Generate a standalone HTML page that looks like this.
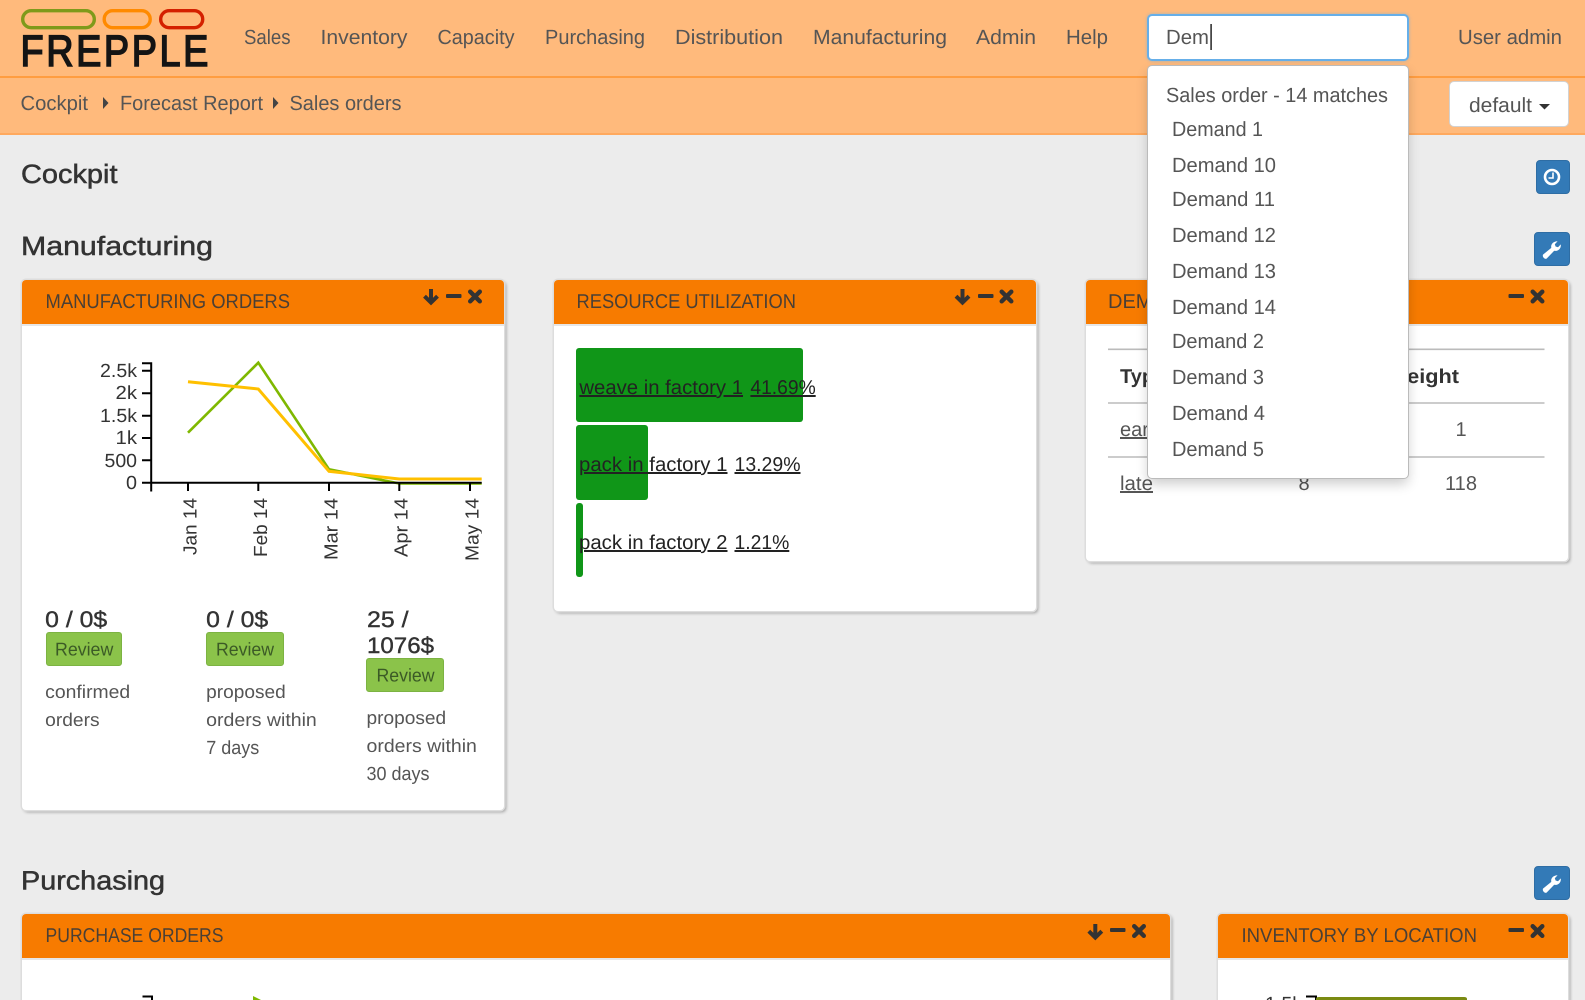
<!DOCTYPE html>
<html lang="en">
<head>
<meta charset="utf-8">
<title>frePPLe Cockpit</title>
<style>
html,body{margin:0;padding:0;width:1585px;height:1000px;overflow:hidden;background:#ececec;font-family:"Liberation Sans",sans-serif}
#page{position:relative;width:1585px;height:1000px;overflow:hidden;background:#ececec}
.abs{position:absolute}
#top{left:0;top:0;width:1585px;height:76px;background:#ffba7c;border-bottom:2px solid #ff9d40}
#sub{left:0;top:78px;width:1585px;height:55px;background:#ffba7c;border-bottom:2px solid #ffa95e}
.card{position:absolute;background:#fff;border-radius:4px;box-shadow:0 0 0 1.5px #ddd,2px 2px 3px rgba(0,0,0,.36)}
.card .h{height:44px;background:#f77b00;border-bottom:2px solid #e6e6e6;border-radius:4px 4px 0 0}
.bar{position:absolute;background:#109618;border-radius:3px}
.btn{position:absolute;background:#337ab7;border:1px solid #2e6da4;border-radius:4px;box-sizing:border-box}
.rev{position:absolute;background:#8bc34a;border:1px solid #7cb342;border-radius:3px;box-sizing:border-box}
#input{left:1147px;top:14px;width:262px;height:47px;background:#fff;border:2px solid #66afe9;border-radius:5px;box-sizing:border-box;box-shadow:0 0 3px rgba(102,175,233,.6)}
#def{left:1449px;top:81px;width:120px;height:46px;background:#fff;border:1.5px solid #d2d2d2;border-radius:5px;box-sizing:border-box}
#drop{left:1148px;top:66px;width:260px;height:412px;background:#fff;border-radius:4px;box-shadow:0 0 0 1px #bbb,0 6px 12px rgba(0,0,0,.2)}
svg.layer{position:absolute;left:0;top:0;overflow:hidden}
text{font-family:"Liberation Sans",sans-serif;text-rendering:geometricPrecision}
</style>
</head>
<body>
<div id="page">
<div id="top" class="abs"></div>
<div id="sub" class="abs"></div>
<div id="input" class="abs"></div>
<div id="def" class="abs"></div>

<div class="card" style="left:22px;top:280px;width:482px;height:530px"><div class="h"></div></div>
<div class="card" style="left:554px;top:280px;width:482px;height:331px"><div class="h"></div></div>
<div class="card" style="left:1086px;top:280px;width:482px;height:281px"><div class="h"></div></div>
<div class="card" style="left:22px;top:914px;width:1148px;height:120px"><div class="h"></div></div>
<div class="card" style="left:1218px;top:914px;width:350px;height:120px"><div class="h"></div></div>

<div class="bar" style="left:576px;top:348px;width:227px;height:74px"></div>
<div class="bar" style="left:576px;top:425px;width:72px;height:75px"></div>
<div class="bar" style="left:576px;top:503px;width:6.5px;height:74px"></div>

<div class="btn" style="left:1536px;top:160px;width:34px;height:34px"></div>
<div class="btn" style="left:1534px;top:232px;width:36px;height:34px"></div>
<div class="btn" style="left:1534px;top:866px;width:36px;height:34px"></div>

<div class="rev" style="left:46px;top:632px;width:76px;height:34px"></div>
<div class="rev" style="left:206px;top:632px;width:78px;height:34px"></div>
<div class="rev" style="left:366px;top:658px;width:78px;height:34px"></div>

<svg class="layer" width="1585" height="1000" viewBox="0 0 1585 1000">
  <defs>
    <g id="ad"><path d="M8.5 1V14.5M2 8.2L8.5 14.6L15 8.2" fill="none" stroke="#333" stroke-width="4"/></g>
    <g id="mi"><rect x="0" y="0" width="15.5" height="4" rx="1" fill="#333"/></g>
    <g id="xx"><path d="M2.2 2.2L11.8 11.8M11.8 2.2L2.2 11.8" fill="none" stroke="#333" stroke-width="4.4" stroke-linecap="round"/></g>
    <g id="wr"><path d="M1 14.6L9.3 7.9C8.5 4.6 11 1.2 15.6 1.2L12.8 4.2L13.6 6.5L16 7.2L18.8 4.4C19.3 8.8 15.9 11.6 12.2 10.8L4.6 18.6C3 19.6 0 17 1 14.6Z" fill="#fff"/></g>
    <clipPath id="cl"><rect x="130" y="350" width="351.7" height="220"/></clipPath>
  </defs>

  <!-- logo -->
  <rect x="22.7" y="10.7" width="71.6" height="17" rx="8.5" fill="none" stroke="#7f9a1a" stroke-width="3.4"/>
  <rect x="104.2" y="10.7" width="46" height="17" rx="8.5" fill="none" stroke="#ff8a00" stroke-width="3.4"/>
  <rect x="160.7" y="10.7" width="42" height="17" rx="8.5" fill="none" stroke="#d42000" stroke-width="3.4"/>
  <text transform="translate(20.5 66.2) scale(.86 1)" font-size="44" letter-spacing="3" fill="#141414" stroke="#141414" stroke-width="1.6">FREPPLE</text>

  <!-- nav -->
  <g font-size="20.5" fill="#555">
    <text x="244" y="44" textLength="46.5" lengthAdjust="spacingAndGlyphs">Sales</text>
    <text x="320.5" y="44" textLength="87" lengthAdjust="spacingAndGlyphs">Inventory</text>
    <text x="437.5" y="44" textLength="77" lengthAdjust="spacingAndGlyphs">Capacity</text>
    <text x="545" y="44" textLength="100" lengthAdjust="spacingAndGlyphs">Purchasing</text>
    <text x="675" y="44" textLength="108" lengthAdjust="spacingAndGlyphs">Distribution</text>
    <text x="813" y="44" textLength="134" lengthAdjust="spacingAndGlyphs">Manufacturing</text>
    <text x="976" y="44" textLength="60" lengthAdjust="spacingAndGlyphs">Admin</text>
    <text x="1066" y="44" textLength="42" lengthAdjust="spacingAndGlyphs">Help</text>
    <text x="1166" y="44" textLength="43" lengthAdjust="spacingAndGlyphs">Dem</text>
    <text x="1458" y="44" textLength="104" lengthAdjust="spacingAndGlyphs">User admin</text>
    <text x="1469" y="112" textLength="63" lengthAdjust="spacingAndGlyphs">default</text>
    <text x="20.5" y="110" textLength="67.5" lengthAdjust="spacingAndGlyphs">Cockpit</text>
    <text x="120" y="110" textLength="143" lengthAdjust="spacingAndGlyphs">Forecast Report</text>
    <text x="289.5" y="110" textLength="112" lengthAdjust="spacingAndGlyphs">Sales orders</text>
  </g>
  <rect x="1210.3" y="24" width="1.6" height="26" fill="#333"/>
  <path d="M1539 104H1550L1544.5 109.5Z" fill="#333"/>
  <path d="M103 97L108.5 103L103 109Z" fill="#444"/>
  <path d="M273 97L278.5 103L273 109Z" fill="#444"/>

  <!-- headings -->
  <g font-size="26.5" fill="#333" stroke="#333" stroke-width=".5">
    <text x="21" y="183" textLength="96.5" lengthAdjust="spacingAndGlyphs">Cockpit</text>
    <text x="21" y="255" textLength="192" lengthAdjust="spacingAndGlyphs">Manufacturing</text>
    <text x="21" y="889.5" textLength="144" lengthAdjust="spacingAndGlyphs">Purchasing</text>
  </g>

  <!-- card titles -->
  <g font-size="20" fill="#4a3f35">
    <text x="45.5" y="308" textLength="244.5" lengthAdjust="spacingAndGlyphs">MANUFACTURING ORDERS</text>
    <text x="576.5" y="308" textLength="219.5" lengthAdjust="spacingAndGlyphs">RESOURCE UTILIZATION</text>
    <text x="1108" y="308">DEMAND ALERTS</text>
    <text x="45.5" y="942" textLength="178" lengthAdjust="spacingAndGlyphs">PURCHASE ORDERS</text>
    <text x="1241.5" y="942" textLength="235.5" lengthAdjust="spacingAndGlyphs">INVENTORY BY LOCATION</text>
  </g>

  <!-- card icons -->
  <use href="#ad" x="422.5" y="288"/><use href="#mi" x="446" y="294"/><use href="#xx" x="468" y="289.5"/>
  <use href="#ad" x="954" y="288"/><use href="#mi" x="978" y="294"/><use href="#xx" x="999.5" y="289.5"/>
  <use href="#mi" x="1508.5" y="294"/><use href="#xx" x="1530.5" y="289.5"/>
  <use href="#ad" x="1086.8" y="923"/><use href="#mi" x="1110" y="928"/><use href="#xx" x="1132" y="924"/>
  <use href="#mi" x="1508.5" y="928"/><use href="#xx" x="1530.5" y="924"/>

  <!-- toolbar icons -->
  <circle cx="1552" cy="177" r="7" fill="none" stroke="#fff" stroke-width="2.6"/>
  <path d="M1553 172.5V178H1548.5" fill="none" stroke="#fff" stroke-width="1.6"/>
  <use href="#wr" x="1542" y="240"/>
  <use href="#wr" x="1542" y="874"/>

  <!-- chart -->
  <g fill="#333" font-size="19" text-anchor="end">
    <text x="137" y="377" textLength="37" lengthAdjust="spacingAndGlyphs">2.5k</text>
    <text x="137" y="399" textLength="21.5" lengthAdjust="spacingAndGlyphs">2k</text>
    <text x="137" y="422" textLength="37" lengthAdjust="spacingAndGlyphs">1.5k</text>
    <text x="137" y="444" textLength="21.5" lengthAdjust="spacingAndGlyphs">1k</text>
    <text x="137" y="467" textLength="32.5" lengthAdjust="spacingAndGlyphs">500</text>
    <text x="137" y="489" textLength="11" lengthAdjust="spacingAndGlyphs">0</text>
  </g>
  <g clip-path="url(#cl)">
    <path d="M188 432.7L258.3 362.7L329 469.3L399.3 483.5L490 483.5" fill="none" stroke="#7fb800" stroke-width="2.6"/>
    <path d="M188 381.7L258.3 389L329 471.3L399.3 479L490 479" fill="none" stroke="#ffc000" stroke-width="3"/>
    <g fill="#333" font-size="19">
      <text transform="translate(196.5 555) rotate(-90)" textLength="57" lengthAdjust="spacingAndGlyphs">Jan 14</text>
      <text transform="translate(267 557) rotate(-90)" textLength="59" lengthAdjust="spacingAndGlyphs">Feb 14</text>
      <text transform="translate(337.5 560) rotate(-90)" textLength="62" lengthAdjust="spacingAndGlyphs">Mar 14</text>
      <text transform="translate(407.5 557) rotate(-90)" textLength="59" lengthAdjust="spacingAndGlyphs">Apr 14</text>
      <text transform="translate(478.5 561) rotate(-90)" textLength="63" lengthAdjust="spacingAndGlyphs">May 14</text>
    </g>
  </g>
  <path d="M142 363.3H151.2V482.7M142 370.7H151M142 393.3H151M142 415.7H151M142 438H151M142 460.3H151M142 482.7H481.7M151.2 483V491.5M188 483V491M258.3 483V491M329 483V491M399.3 483V491M470 483V491" fill="none" stroke="#000" stroke-width="2"/>

  <!-- KPI -->
  <g font-size="22.5" fill="#333" stroke="#333" stroke-width=".4">
    <text x="45.2" y="627" textLength="62" lengthAdjust="spacingAndGlyphs">0 / 0$</text>
    <text x="206.2" y="627" textLength="62" lengthAdjust="spacingAndGlyphs">0 / 0$</text>
    <text x="367" y="627" textLength="41.5" lengthAdjust="spacingAndGlyphs">25 /</text>
    <text x="367" y="653" textLength="67" lengthAdjust="spacingAndGlyphs">1076$</text>
  </g>
  <g font-size="18.5" fill="#3b5a26">
    <text x="55" y="655.5" textLength="58.3" lengthAdjust="spacingAndGlyphs">Review</text>
    <text x="216" y="655.5" textLength="58" lengthAdjust="spacingAndGlyphs">Review</text>
    <text x="376.5" y="681.5" textLength="58" lengthAdjust="spacingAndGlyphs">Review</text>
  </g>
  <g font-size="18.5" fill="#555">
    <text x="45.2" y="698" textLength="85" lengthAdjust="spacingAndGlyphs">confirmed</text>
    <text x="45.2" y="726" textLength="54.4" lengthAdjust="spacingAndGlyphs">orders</text>
    <text x="206.2" y="698" textLength="79.5" lengthAdjust="spacingAndGlyphs">proposed</text>
    <text x="206.2" y="726" textLength="110.6" lengthAdjust="spacingAndGlyphs">orders within</text>
    <text x="206.2" y="754" font-size="19" textLength="53" lengthAdjust="spacingAndGlyphs">7 days</text>
    <text x="366.5" y="724" textLength="79.6" lengthAdjust="spacingAndGlyphs">proposed</text>
    <text x="366.5" y="752" textLength="110.4" lengthAdjust="spacingAndGlyphs">orders within</text>
    <text x="366.5" y="780" font-size="19" textLength="63" lengthAdjust="spacingAndGlyphs">30 days</text>
  </g>

  <!-- resource bars text -->
  <g font-size="20" fill="#222" text-decoration="underline">
    <text x="579.4" y="394" textLength="163.6" lengthAdjust="spacingAndGlyphs">weave in factory 1</text>
    <text x="750.4" y="394" textLength="65.3" lengthAdjust="spacingAndGlyphs">41.69%</text>
    <text x="579" y="471" textLength="148.5" lengthAdjust="spacingAndGlyphs">pack in factory 1</text>
    <text x="734.5" y="471" textLength="66" lengthAdjust="spacingAndGlyphs">13.29%</text>
    <text x="579" y="549" textLength="148.5" lengthAdjust="spacingAndGlyphs">pack in factory 2</text>
    <text x="734.5" y="549" textLength="54.8" lengthAdjust="spacingAndGlyphs">1.21%</text>
  </g>

  <!-- demand table -->
  <path d="M1108 349.3H1544.5M1108 403H1544.5M1108 457H1544.5" stroke="#bbb" stroke-width="1.6" fill="none"/>
  <g font-size="20">
    <text x="1120" y="383" fill="#333" font-weight="bold">Type</text>
    <text x="1387" y="383" fill="#333" font-weight="bold" textLength="72" lengthAdjust="spacingAndGlyphs">Weight</text>
    <g fill="#555">
      <text x="1120" y="436" text-decoration="underline">early</text>
      <text x="1461" y="436" text-anchor="middle">1</text>
      <text x="1120" y="490" text-decoration="underline" textLength="33" lengthAdjust="spacingAndGlyphs">late</text>
      <text x="1304" y="490" text-anchor="middle">8</text>
      <text x="1445" y="490" textLength="32" lengthAdjust="spacingAndGlyphs">118</text>
    </g>
  </g>

  <!-- peeking content at the bottom -->
  <path d="M142.5 996.5H152V1000" fill="none" stroke="#000" stroke-width="2"/>
  <path d="M253 996L261 1000H253Z" fill="#7fb800"/>
  <text x="1265" y="1010" font-size="19" fill="#333" textLength="37" lengthAdjust="spacingAndGlyphs">1.5k</text>
  <path d="M1306 996.5H1316V1000" fill="none" stroke="#000" stroke-width="2"/>
  <path d="M1316 1000V999Q1316 997 1319 997H1464Q1467 997 1467 999V1000Z" fill="#7a8a12"/>
</svg>

<div id="drop" class="abs">
  <svg width="260" height="412" viewBox="1148 66 260 412" style="display:block">
    <g font-size="20.5" fill="#555">
      <text x="1166" y="102" textLength="222" lengthAdjust="spacingAndGlyphs">Sales order - 14 matches</text>
      <text x="1172" y="136" textLength="91" lengthAdjust="spacingAndGlyphs">Demand 1</text>
      <text x="1172" y="172" textLength="104" lengthAdjust="spacingAndGlyphs">Demand 10</text>
      <text x="1172" y="206" textLength="103" lengthAdjust="spacingAndGlyphs">Demand 11</text>
      <text x="1172" y="242" textLength="104" lengthAdjust="spacingAndGlyphs">Demand 12</text>
      <text x="1172" y="278" textLength="104" lengthAdjust="spacingAndGlyphs">Demand 13</text>
      <text x="1172" y="314" textLength="104" lengthAdjust="spacingAndGlyphs">Demand 14</text>
      <text x="1172" y="348" textLength="92" lengthAdjust="spacingAndGlyphs">Demand 2</text>
      <text x="1172" y="384" textLength="92" lengthAdjust="spacingAndGlyphs">Demand 3</text>
      <text x="1172" y="420" textLength="93" lengthAdjust="spacingAndGlyphs">Demand 4</text>
      <text x="1172" y="456" textLength="92" lengthAdjust="spacingAndGlyphs">Demand 5</text>
    </g>
  </svg>
</div>
</div>
</body>
</html>
